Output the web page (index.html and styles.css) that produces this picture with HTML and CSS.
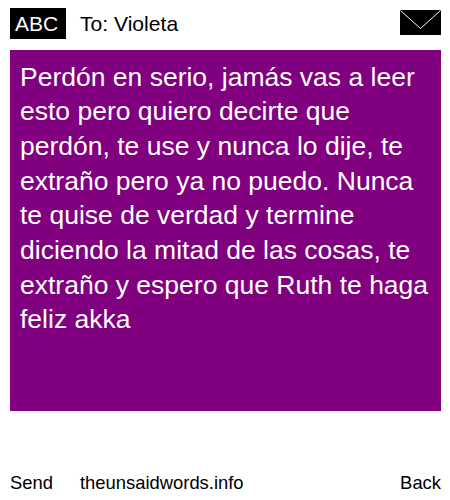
FILE: index.html
```html
<!DOCTYPE html>
<html lang="es">
<head>
<meta charset="utf-8">
<title>To: Violeta</title>
<link rel="stylesheet" href="styles.css">
</head>
<body>
<div class="page">
  <header class="top">
    <div class="abc">ABC</div>
    <div class="to">To: Violeta</div>
    <svg class="env" width="41" height="25" viewBox="0 0 41 25" aria-hidden="true">
      <rect width="41" height="25" fill="#000"/>
      <path d="M0.5 0.5 L20.5 18.5 L40.5 0.5" fill="none" stroke="#fff" stroke-width="1"/>
    </svg>
  </header>
  <main class="msg">Perdón en serio, jamás vas a leer esto pero quiero decirte que perdón, te use y nunca lo dije, te extraño pero ya no puedo. Nunca te quise de verdad y termine diciendo la mitad de las cosas, te extraño y espero que Ruth te haga feliz akka</main>
  <footer class="bottom">
    <span class="send">Send</span>
    <span class="site">theunsaidwords.info</span>
    <span class="back">Back</span>
  </footer>
</div>
</body>
</html>
```

FILE: styles.css
```css
html, body {
  margin: 0;
  padding: 0;
  background: #fff;
}
.page {
  width: 450px;
  height: 500px;
  box-sizing: border-box;
  padding: 8px 9px 0 10px;
  display: flex;
  flex-direction: column;
  font-family: "Liberation Sans", Arial, sans-serif;
  color: #000;
}
.top {
  display: flex;
  align-items: center;
  height: 31px;
  font-size: 21.1px;
}
.abc {
  width: 56px;
  height: 31px;
  box-sizing: border-box;
  padding-left: 5px;
  line-height: 31px;
  background: #000;
  color: #fff;
  font-size: 21px;
}
.to {
  margin-left: 14px;
  flex: 1;
}
.env {
  display: block;
  margin-top: -3px;
}
.msg {
  margin-top: 11px;
  height: 361px;
  box-sizing: border-box;
  padding: 9.5px 10px 0;
  background: #800080;
  color: #fff;
  font-size: 26.5px;
  line-height: 34.7px;
}
.bottom {
  margin-top: 60px;
  display: flex;
  font-size: 18.4px;
  line-height: 24px;
}
.send {
  width: 70px;
}
.site {
  flex: 1;
}
```
